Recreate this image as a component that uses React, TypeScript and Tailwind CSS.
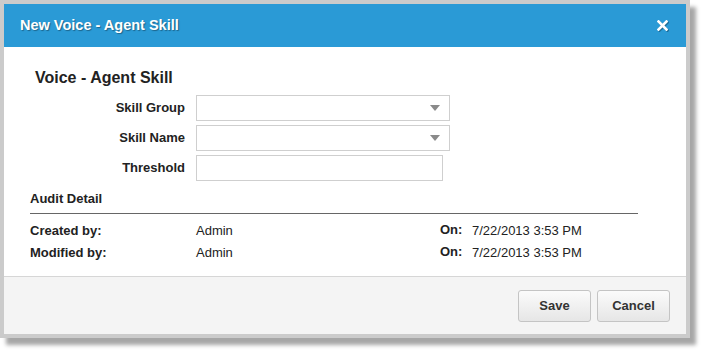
import React from "react";

const font = { fontFamily: '"Liberation Sans", Arial, sans-serif' };

const SelectBox = () => (
  <div className="w-[254px] h-[26px] border border-[#cfcfcf] bg-white flex items-center justify-end pr-[9px]">
    <svg width="10" height="6" viewBox="0 0 10 6">
      <path d="M0 0 H10 L5 6 Z" fill="#8a8a8a" />
    </svg>
  </div>
);

const FormRow = ({ label, children }: { label: string; children: React.ReactNode }) => (
  <div className="flex items-center h-[26px]">
    <div className="w-[166px] text-right font-bold text-[13px] text-[#222] pr-[11px]">{label}</div>
    {children}
  </div>
);

const AuditRow = ({ label, user, date }: { label: string; user: string; date: string }) => (
  <div className="flex items-center h-[16px] text-[13px] text-[#222]">
    <div className="w-[166px] font-bold">{label}</div>
    <div className="w-[244px]">{user}</div>
    <div className="w-[32px] font-bold -mt-[2px]">On:</div>
    <div>{date}</div>
  </div>
);

const App = () => {
  return (
    <div className="w-[705px] h-[353px] bg-white" style={font}>
      <div className="w-[690px] border-4 border-[#cbcbcb] shadow-[6px_7px_4px_rgba(0,0,0,0.35)] flex flex-col">
        {/* Header */}
        <div className="h-[43px] bg-[#2a9ad6] flex items-center justify-between pl-[16px] pr-[18px]">
          <h1 className="text-white font-bold text-[14.5px] [text-shadow:1px_1px_1px_rgba(0,0,0,0.35)]">
            New Voice - Agent Skill
          </h1>
          <svg width="11" height="11" viewBox="0 0 11 11" className="drop-shadow-[1px_1px_0_rgba(0,0,0,0.3)]">
            <path d="M1.5 1.5 L9.5 9.5 M9.5 1.5 L1.5 9.5" stroke="#fff" strokeWidth="2.6" strokeLinecap="square" />
          </svg>
        </div>

        {/* Body */}
        <div className="h-[229px] bg-white pl-[26px] pt-[22px]">
          <h2 className="ml-[5px] text-[16px] leading-[18px] font-bold text-[#222]">Voice - Agent Skill</h2>
          <div className="mt-[8px] flex flex-col gap-[4px]">
            <FormRow label="Skill Group">
              <SelectBox />
            </FormRow>
            <FormRow label="Skill Name">
              <SelectBox />
            </FormRow>
            <FormRow label="Threshold">
              <input className="w-[247px] h-[26px] border border-[#cfcfcf] bg-white outline-none" />
            </FormRow>
          </div>
          <div className="mt-[10px] w-[608px] pb-[7px] border-b border-[#666] text-[13px] leading-[15px] font-bold text-[#222]">
            Audit Detail
          </div>
          <div className="mt-[9px] flex flex-col gap-[6px]">
            <AuditRow label="Created by:" user="Admin" date="7/22/2013 3:53 PM" />
            <AuditRow label="Modified by:" user="Admin" date="7/22/2013 3:53 PM" />
          </div>
        </div>

        {/* Footer */}
        <div className="h-[58px] bg-[#f4f4f4] border-t border-[#d6d6d6] flex justify-end items-start pt-[13px] pr-[16px] gap-[6px]">
          <button className="w-[73px] h-[32px] rounded-[3px] border border-[#c4c4c4] bg-gradient-to-b from-[#fbfbfb] to-[#e6e6e6] text-[13px] font-bold text-[#333]">
            Save
          </button>
          <button className="w-[73px] h-[32px] rounded-[3px] border border-[#c4c4c4] bg-gradient-to-b from-[#fbfbfb] to-[#e6e6e6] text-[13px] font-bold text-[#333]">
            Cancel
          </button>
        </div>
      </div>
    </div>
  );
};

export default App;
